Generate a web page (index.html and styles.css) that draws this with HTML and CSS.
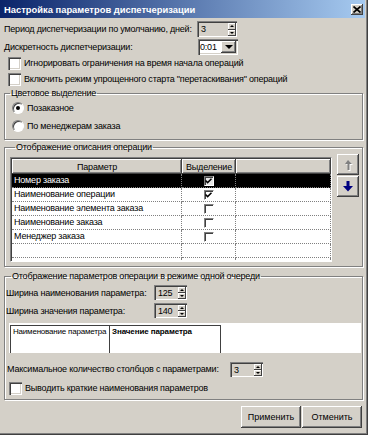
FILE: index.html
```html
<!DOCTYPE html>
<html lang="ru">

<head>
  <meta charset="UTF-8">
  <title>Настройка параметров диспетчеризации</title>
  <link rel="stylesheet" href="styles.css">
</head>

<body>
  <div class="window">
    <div class="titlebar">
      <span class="title">Настройка параметров диспетчеризации</span>
      <span class="close-btn">
        <svg width="8" height="7" viewBox="0 0 8 7"><path d="M0.5 0.5L7.5 6.5M7.5 0.5L0.5 6.5" stroke="#000" stroke-width="1.7"/></svg>
      </span>
    </div>

    <div class="content">
      <div class="row">
        <span class="row-label">Период диспетчеризации по умолчанию, дней:</span>
        <div class="spin">
          <span class="spin-value">3</span>
          <span class="spin-btns">
            <span class="spin-btn"><i class="tri-up"></i></span>
            <span class="spin-btn"><i class="tri-down"></i></span>
          </span>
        </div>
      </div>

      <div class="row row-combo">
        <span class="row-label">Дискретность диспетчеризации:</span>
        <div class="combo">
          <span class="combo-value">0:01</span>
          <span class="combo-btn"><i class="tri-down big"></i></span>
        </div>
      </div>

      <div class="check">
        <span class="cbox"></span>
        <span>Игнорировать ограничения на время начала операций</span>
      </div>
      <div class="check">
        <span class="cbox"></span>
        <span>Включить режим упрощенного старта "перетаскивания" операций</span>
      </div>

      <fieldset class="group group-color">
        <legend>Цветовое выделение</legend>
        <div class="radio-row">
          <span class="radio checked"></span>
          <span>Позаказное</span>
        </div>
        <div class="radio-row">
          <span class="radio"></span>
          <span>По менеджерам заказа</span>
        </div>
      </fieldset>

      <fieldset class="group group-desc">
        <legend>Отображение описания операции</legend>
        <div class="desc-body">
          <div class="grid">
            <table>
              <colgroup>
                <col class="col-param">
                <col class="col-sel">
                <col>
              </colgroup>
              <thead>
                <tr>
                  <th>Параметр</th>
                  <th>Выделение</th>
                  <th></th>
                </tr>
              </thead>
              <tbody>
                <tr class="selected">
                  <td>Номер заказа</td>
                  <td class="cell-check"><span class="gbox"><svg width="7" height="6" viewBox="0 0 7 6"><path d="M0.5 2.5L2.6 4.6L6.5 0.7" fill="none" stroke="#000" stroke-width="1.5"/></svg></span></td>
                  <td></td>
                </tr>
                <tr>
                  <td>Наименование операции</td>
                  <td class="cell-check"><span class="gbox"><svg width="7" height="6" viewBox="0 0 7 6"><path d="M0.5 2.5L2.6 4.6L6.5 0.7" fill="none" stroke="#000" stroke-width="1.5"/></svg></span></td>
                  <td></td>
                </tr>
                <tr>
                  <td>Наименование элемента заказа</td>
                  <td class="cell-check"><span class="gbox"></span></td>
                  <td></td>
                </tr>
                <tr>
                  <td>Наименование заказа</td>
                  <td class="cell-check"><span class="gbox"></span></td>
                  <td></td>
                </tr>
                <tr>
                  <td>Менеджер заказа</td>
                  <td class="cell-check"><span class="gbox"></span></td>
                  <td></td>
                </tr>
                <tr>
                  <td></td>
                  <td></td>
                  <td></td>
                </tr>
                <tr>
                  <td></td>
                  <td></td>
                  <td></td>
                </tr>
              </tbody>
            </table>
          </div>

          <div class="move-btns">
            <span class="btn-move">
              <svg width="12" height="13" viewBox="0 0 12 13">
                <path d="M6 2L10 6H7.5V12H5.5V6H3Z" fill="#fff" transform="translate(1 1)"/>
                <path d="M6 2L10 6H7.5V12H5.5V6H3Z" fill="#808080"/>
              </svg>
            </span>
            <span class="btn-move">
              <svg width="12" height="13" viewBox="0 0 12 13">
                <path d="M4.5 1H7.5V6H11L6 11.5L1 6H4.5Z" fill="#000080"/>
              </svg>
            </span>
          </div>
        </div>
      </fieldset>

      <fieldset class="group group-queue">
        <legend>Отображение параметров операции в режиме одной очереди</legend>
        <div class="row row-queue">
          <span class="queue-label">Ширина наименования параметра:</span>
          <div class="spin spin-small">
            <span class="spin-value">125</span>
            <span class="spin-btns">
              <span class="spin-btn"><i class="tri-up"></i></span>
              <span class="spin-btn"><i class="tri-down"></i></span>
            </span>
          </div>
        </div>
        <div class="row row-queue">
          <span class="queue-label">Ширина значения параметра:</span>
          <div class="spin spin-small">
            <span class="spin-value">140</span>
            <span class="spin-btns">
              <span class="spin-btn"><i class="tri-up"></i></span>
              <span class="spin-btn"><i class="tri-down"></i></span>
            </span>
          </div>
        </div>

        <div class="preview">
          <table class="preview-table">
            <tr>
              <td class="p-name">Наименование параметра</td>
              <td class="p-value">Значение параметра</td>
            </tr>
          </table>
        </div>

        <div class="row row-cols">
          <span class="cols-label">Максимальное количество столбцов с параметрами:</span>
          <div class="spin spin-small">
            <span class="spin-value">3</span>
            <span class="spin-btns">
              <span class="spin-btn"><i class="tri-up"></i></span>
              <span class="spin-btn"><i class="tri-down"></i></span>
            </span>
          </div>
        </div>

        <div class="check check-short">
          <span class="cbox"></span>
          <span>Выводить краткие наименования параметров</span>
        </div>
      </fieldset>

      <div class="actions">
        <button class="btn">Применить</button>
        <button class="btn">Отменить</button>
      </div>
    </div>
  </div>
</body>

</html>
```

FILE: styles.css
```css
body {
  margin: 0;
  background: #d4d0c8;
  font-family: Tahoma, "Liberation Sans", "DejaVu Sans", sans-serif;
  font-size: 9px;
  letter-spacing: -0.2px;
  color: #000;
}

.window {
  width: 368px;
  height: 435px;
  box-sizing: border-box;
  border-right: 1px solid #404040;
  border-bottom: 1px solid #404040;
  box-shadow: inset -1px -1px 0 #808080;
  padding-right: 2px;
  padding-bottom: 2px;
}

/* title bar */

.titlebar {
  height: 18px;
  display: flex;
  align-items: center;
  justify-content: space-between;
  padding: 0 2px 0 4px;
  background: linear-gradient(to right, #0a246a, #a6caf0);
}

.title {
  color: #fff;
  font-size: 9.4px;
  font-weight: bold;
  letter-spacing: 0;
}

.close-btn {
  width: 12px;
  height: 11px;
  display: flex;
  align-items: center;
  justify-content: center;
  background: #d4d0c8;
  box-shadow: inset -1px -1px 0 #404040, inset 1px 1px 0 #fff, inset -2px -2px 0 #808080;
}

/* common controls */

.content {
  padding: 3px 2px 0 4px;
}

.row {
  display: flex;
  align-items: center;
  height: 16px;
  white-space: nowrap;
}

.row-label {
  width: 193px;
  flex-shrink: 0;
}

.row-combo {
  margin-top: 2px;
}

.spin {
  display: flex;
  width: 40px;
  height: 16px;
  box-sizing: border-box;
  padding: 2px 1px 1px 2px;
  box-shadow: inset 1px 1px 0 #808080, inset 2px 2px 0 #404040, inset -1px -1px 0 #fff;
}

.spin-value {
  flex: 1;
  padding-left: 2px;
  line-height: 13px;
}

.spin-btns {
  width: 8px;
  display: flex;
  flex-direction: column;
}

.spin-btn {
  flex: 1;
  display: flex;
  align-items: center;
  justify-content: center;
  background: #d4d0c8;
  box-shadow: inset -1px -1px 0 #404040, inset 1px 1px 0 #fff;
}

.tri-up {
  border-left: 2px solid transparent;
  border-right: 2px solid transparent;
  border-bottom: 2px solid #000;
}

.tri-down {
  border-left: 2px solid transparent;
  border-right: 2px solid transparent;
  border-top: 2px solid #000;
}

.tri-down.big {
  border-left-width: 4px;
  border-right-width: 4px;
  border-top-width: 4px;
}

.combo {
  display: flex;
  width: 40px;
  height: 16px;
  margin-left: 1px;
  box-sizing: border-box;
  padding: 2px;
  background: #fff;
  box-shadow: inset 1px 1px 0 #808080, inset 2px 2px 0 #404040, inset -1px -1px 0 #fff, inset -2px -2px 0 #d4d0c8;
}

.combo-value {
  flex: 1;
  line-height: 12px;
}

.combo-btn {
  width: 15px;
  display: flex;
  align-items: center;
  justify-content: center;
  background: #d4d0c8;
  box-shadow: inset -1px -1px 0 #404040, inset 1px 1px 0 #fff, inset -2px -2px 0 #808080;
}

.check {
  display: flex;
  align-items: center;
  gap: 3px;
  height: 16px;
  padding-left: 4px;
  white-space: nowrap;
}

.check:first-of-type {
  margin-top: 2px;
}

.cbox {
  width: 13px;
  height: 13px;
  flex-shrink: 0;
  box-sizing: border-box;
  background: #fff;
  box-shadow: inset 1px 1px 0 #808080, inset 2px 2px 0 #404040, inset -1px -1px 0 #fff, inset -2px -2px 0 #d4d0c8;
}

/* group boxes */

.group {
  margin: 0;
  padding: 0;
  min-width: 0;
  border: 1px solid #808080;
  box-shadow: inset 1px 1px 0 #fff, 1px 1px 0 #fff;
}

.group legend {
  margin-left: 5px;
  padding: 0 1px;
  line-height: 13px;
}

.group-color {
  padding-bottom: 3px;
}

.radio-row {
  display: flex;
  align-items: center;
  gap: 3px;
  height: 16px;
  padding-left: 7px;
  margin-bottom: 2px;
}

.radio {
  width: 12px;
  height: 12px;
  box-sizing: border-box;
  border-radius: 50%;
  background: #fff;
  border: 1px solid;
  border-color: #808080 #fff #fff #808080;
  box-shadow: inset 1px 1px 0 #404040;
  display: flex;
  align-items: center;
  justify-content: center;
}

.radio.checked::after {
  content: "";
  width: 4px;
  height: 4px;
  border-radius: 50%;
  background: #000;
}

.group-desc {
  margin-top: 1px;
  padding: 0 0 4px 5px;
}

.desc-body {
  display: flex;
  align-items: flex-start;
}

.grid {
  width: 322px;
  height: 105px;
  margin-top: 3px;
  box-sizing: border-box;
  overflow: hidden;
  background: #fff;
  border: 1px solid;
  border-color: #808080 #fff #fff #808080;
  box-shadow: inset 1px 1px 0 #404040;
  padding: 1px 0 0 1px;
}

.grid table {
  width: 100%;
  table-layout: fixed;
  border-collapse: separate;
  border-spacing: 0;
}

.col-param {
  width: 170px;
}

.col-sel {
  width: 54px;
}

.grid th {
  height: 15px;
  padding: 0;
  font-weight: normal;
  background: #d4d0c8;
  box-shadow: inset -1px -1px 0 #404040, inset 1px 1px 0 #fff, inset -2px -2px 0 #808080;
}

.grid td {
  height: 13px;
  padding: 0 0 0 2px;
  border-right: 1px dotted #808080;
  border-bottom: 1px dotted #808080;
  white-space: nowrap;
  line-height: 13px;
}

.grid tr.selected td {
  background: #000;
  color: #fff;
}

.grid td.cell-check {
  padding: 0;
  text-align: center;
}

.gbox {
  display: inline-flex;
  align-items: center;
  justify-content: center;
  vertical-align: middle;
  width: 10px;
  height: 10px;
  box-sizing: border-box;
  background: #fff;
  border: 1px solid;
  border-color: #808080 #fff #fff #808080;
  box-shadow: inset 1px 1px 0 #404040;
}

.selected .gbox {
  background: #e8e8e8;
}

.move-btns {
  display: flex;
  flex-direction: column;
  gap: 1px;
  margin-left: 5px;
}

.btn-move {
  width: 22px;
  height: 21px;
  display: flex;
  align-items: center;
  justify-content: center;
  background: #d4d0c8;
  box-shadow: inset -1px -1px 0 #404040, inset 1px 1px 0 #fff, inset -2px -2px 0 #808080;
}

.group-queue {
  margin-top: 3px;
  padding: 0 0 3px 1px;
}

.row-queue {
  height: 15px;
  margin-top: 2px;
}

.row-queue + .row-queue {
  margin-top: 3px;
}

.queue-label {
  width: 148px;
  flex-shrink: 0;
}

.spin-small {
  width: 33px;
  height: 15px;
}

.preview {
  height: 30px;
  margin: 5px 1px 0 3px;
  overflow: hidden;
  background: #fff;
}

.preview-table {
  margin: 2px 0 0 1px;
  width: 211px;
  height: 40px;
  border-collapse: collapse;
  table-layout: fixed;
}

.preview-table td {
  border: 1px solid #404040;
  vertical-align: top;
  padding: 1px 0 0 2px;
  white-space: nowrap;
  overflow: hidden;
}

.p-name {
  width: 96px;
  font-size: 8px;
  letter-spacing: -0.2px;
}

.p-value {
  font-size: 8px;
  font-weight: bold;
  letter-spacing: -0.1px;
}

.row-cols {
  margin-top: 8px;
}

.cols-label {
  width: 223px;
  flex-shrink: 0;
  padding-left: 1px;
}

.check-short {
  margin-top: 3px;
  padding-left: 3px;
}

/* buttons */

.actions {
  display: flex;
  justify-content: flex-end;
  gap: 1px;
  margin-top: 6px;
  padding-right: 1px;
}

.btn {
  width: 60px;
  height: 22px;
  padding: 0;
  border: none;
  font: inherit;
  color: #000;
  background: #d4d0c8;
  box-shadow: inset -1px -1px 0 #404040, inset 1px 1px 0 #fff, inset -2px -2px 0 #808080;
}
```
